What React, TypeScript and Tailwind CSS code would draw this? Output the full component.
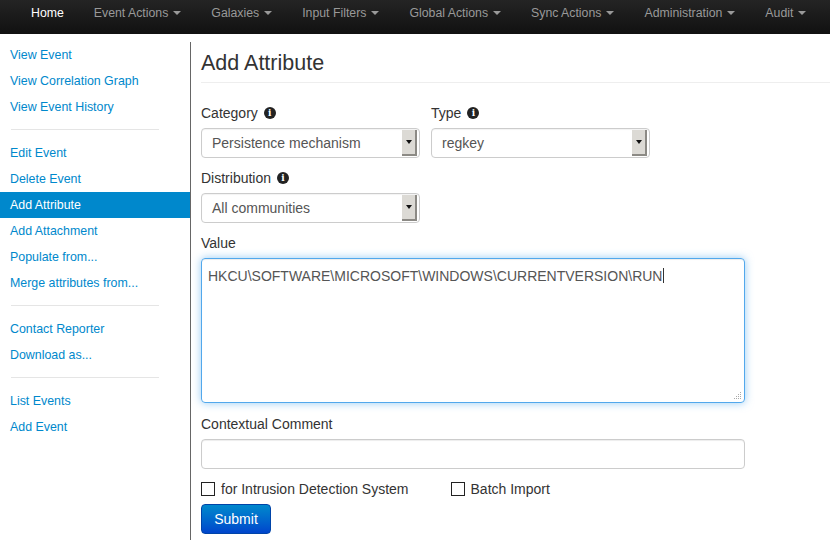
import React from 'react';

const font = { fontFamily: '"Liberation Sans", Arial, sans-serif' };

const navItems = ['Event Actions', 'Galaxies', 'Input Filters', 'Global Actions', 'Sync Actions', 'Administration', 'Audit'];

const sideGroups: string[][] = [
  ['View Event', 'View Correlation Graph', 'View Event History'],
  ['Edit Event', 'Delete Event', 'Add Attribute', 'Add Attachment', 'Populate from...', 'Merge attributes from...'],
  ['Contact Reporter', 'Download as...'],
  ['List Events', 'Add Event'],
];

const Caret: React.FC = () => (
  <span className="ml-[5px] inline-block h-0 w-0 border-x-[4px] border-t-[4px] border-x-transparent border-t-[#999] align-middle" />
);

const InfoIcon: React.FC = () => (
  <span
    className="ml-[6px] inline-flex h-[12px] w-[12px] items-center justify-center rounded-full bg-[#222] text-[9px] font-bold leading-none text-white"
    style={{ fontFamily: '"DejaVu Serif", serif' }}
  >
    i
  </span>
);

const Select: React.FC<{ value: string }> = ({ value }) => (
  <div className="flex h-[30px] w-[219px] items-center justify-between rounded-[4px] border border-[#ccc] bg-white pl-[10px] pr-[2px] shadow-[inset_0_1px_1px_rgba(0,0,0,0.05)]">
    <span className="text-[14px] text-[#555]">{value}</span>
    <span className="flex h-[26px] w-[15px] items-center justify-center border-r-2 border-b-2 border-[#8c8a85] bg-[#dcdad5]">
      <span className="inline-block h-0 w-0 border-x-[3px] border-t-[4px] border-x-transparent border-t-[#111]" />
    </span>
  </div>
);

const Label: React.FC<{ children: React.ReactNode; info?: boolean }> = ({ children, info }) => (
  <div className="mb-[5px] flex h-[20px] items-center text-[14px] text-[#333]">
    {children}
    {info && <InfoIcon />}
  </div>
);

const App: React.FC = () => {
  return (
    <div className="min-h-[540px] bg-white" style={font}>
      {/* top navbar */}
      <div className="flex h-[34px] items-start whitespace-nowrap bg-gradient-to-b from-[#242424] to-[#111] pl-[16px] pt-[5px]">
        <span className="shrink-0 px-[15px] text-[12.3px] leading-[16px] text-white">Home</span>
        {navItems.map((item) => (
          <span key={item} className="flex shrink-0 items-center px-[15px] text-[12.3px] leading-[16px] text-[#999]">
            {item}
            <Caret />
          </span>
        ))}
      </div>

      <div className="flex">
        {/* side menu */}
        <div className="w-[191px] shrink-0 pt-[8px]">
          <div className="min-h-[498px] border-r border-[#666] pb-[20px]">
            {sideGroups.map((group, gi) => (
              <div key={gi}>
                {gi > 0 && <div className="mx-[11px] mt-[9px] mb-[10px] h-px w-[148px] bg-[#e5e5e5]" />}
                {group.map((link) => (
                  <div
                    key={link}
                    className={
                      link === 'Add Attribute'
                        ? 'flex h-[26px] items-center bg-[#0088cc] px-[10px] text-[12.4px] text-white'
                        : 'flex h-[26px] items-center px-[10px] text-[12.4px] text-[#0088cc]'
                    }
                  >
                    {link}
                  </div>
                ))}
              </div>
            ))}
          </div>
        </div>

        {/* form area */}
        <main className="flex-1 pl-[10px] pt-[13px]">
          <div className="border-b border-[#eee] pb-[5px]">
            <h2 className="h-[30px] text-[21.5px] leading-[32px] text-[#333]">Add Attribute</h2>
          </div>

          <div className="mt-[20px] flex gap-[11px]">
            <div>
              <Label info>Category</Label>
              <Select value="Persistence mechanism" />
            </div>
            <div>
              <Label info>Type</Label>
              <Select value="regkey" />
            </div>
          </div>

          <div className="mt-[10px]">
            <Label info>Distribution</Label>
            <Select value="All communities" />
          </div>

          <div className="mt-[10px]">
            <Label>Value</Label>
            <div className="relative h-[145px] w-[544px] rounded-[4px] border border-[#52a8ec] px-[6px] py-[5px] shadow-[inset_0_1px_1px_rgba(0,0,0,0.075),0_0_8px_rgba(82,168,236,0.6)]">
              <span className="text-[14px] leading-[20px] text-[#555]">
                HKCU\SOFTWARE\MICROSOFT\WINDOWS\CURRENTVERSION\RUN
              </span>
              <span className="ml-px inline-block h-[15px] w-px translate-y-[2px] bg-[#333]" />
              <svg className="absolute bottom-[2px] right-[2px]" width="9" height="9" viewBox="0 0 9 9">
                <g fill="#aaa">
                  <rect x="7" y="1" width="1" height="1" />
                  <rect x="5" y="3" width="1" height="1" />
                  <rect x="7" y="3" width="1" height="1" />
                  <rect x="3" y="5" width="1" height="1" />
                  <rect x="5" y="5" width="1" height="1" />
                  <rect x="7" y="5" width="1" height="1" />
                  <rect x="1" y="7" width="1" height="1" />
                  <rect x="3" y="7" width="1" height="1" />
                  <rect x="5" y="7" width="1" height="1" />
                  <rect x="7" y="7" width="1" height="1" />
                </g>
              </svg>
            </div>
          </div>

          <div className="mt-[11px]">
            <Label>Contextual Comment</Label>
            <div className="h-[30px] w-[544px] rounded-[4px] border border-[#ccc] shadow-[inset_0_1px_1px_rgba(0,0,0,0.075)]" />
          </div>

          <div className="mt-[10px] flex h-[20px] items-center text-[14px] text-[#333]">
            <span className="mr-[6px] inline-block h-[14px] w-[14px] border border-[#222] bg-white" />
            <span>for Intrusion Detection System</span>
            <span className="ml-[42px] mr-[6px] inline-block h-[14px] w-[14px] border border-[#222] bg-white" />
            <span>Batch Import</span>
          </div>

          <button className="mt-[5px] h-[30px] w-[70px] rounded-[4px] border border-[#0044a8] bg-gradient-to-b from-[#0088cc] to-[#0044cc] text-[14px] text-white">
            Submit
          </button>
        </main>
      </div>
    </div>
  );
};

export default App;
